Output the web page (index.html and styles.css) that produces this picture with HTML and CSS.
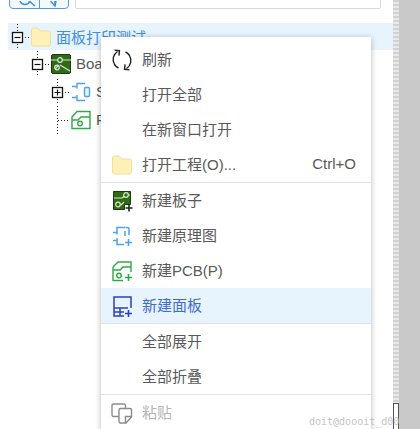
FILE: index.html
```html
<!DOCTYPE html>
<html lang="zh-CN">
<head>
<meta charset="utf-8">
<title>面板打印测试</title>
<link rel="stylesheet" href="styles.css">
</head>
<body>
<div class="app">
  <div class="main">
    <div class="panel">
      <div class="toolbar">
        <div class="btn-group">
          <button class="tool-btn wide"><svg width="29" height="7" viewBox="0 0 29 7"><path d="M10 0c1 2.500 3 3.500 5 3.500s4-1 5-3.500" fill="none" stroke="#3f8fd8" stroke-width="1.500"/><path d="M19 0l6 5" stroke="#3f8fd8" stroke-width="1.500"/></svg></button>
          <button class="tool-btn"><svg width="28" height="7" viewBox="0 0 28 7"><path d="M15 0v5M10.500 0l4.500 5 1-5" fill="none" stroke="#3f8fd8" stroke-width="1.500"/></svg></button>
        </div>
        <div class="search"></div>
      </div>
      <ul class="tree">
        <li class="node selected">
          <svg class="toggle" width="20" height="28" viewBox="0 0 20 28"><path d="M6.500 1v7M6.500 21v6M14 14.500h5" stroke="#222" stroke-dasharray="1 2"/><rect x="1.500" y="9.500" width="10" height="10" fill="#fff" stroke="#111" stroke-width="1.300"/><path d="M3.500 14.500h6" stroke="#111" stroke-width="1.200"/></svg>
          <svg class="icon" width="20" height="20" viewBox="0 0 20 20"><path d="M.5 3a2 2 0 0 1 2-2h4.500l2.500 3h8a2 2 0 0 1 2 2v11a2 2 0 0 1-2 2h-15a2 2 0 0 1-2-2z" fill="#fdf1b8" stroke="#efe0a0"/></svg>
          <span class="label link">面板打印测试</span>
        </li>
        <li class="node level-1">
          <svg class="toggle" width="20" height="28" viewBox="0 0 20 28"><path d="M6.500 1v7M6.500 21v6M14 14.500h5" stroke="#222" stroke-dasharray="1 2"/><rect x="1.500" y="9.500" width="10" height="10" fill="#fff" stroke="#111" stroke-width="1.300"/><path d="M3.500 14.500h6" stroke="#111" stroke-width="1.200"/></svg>
          <svg class="icon" width="20" height="20" viewBox="0 0 20 20"><rect width="19" height="19" x=".5" y=".5" rx="1.500" fill="#2f6b16" stroke="#1c3a10"/><path d="M0 6h7M11 6h9M4 15l3-3M9 11l5 3 5 3" fill="none" stroke="#d7e8cf" stroke-width="1.200"/><circle cx="9" cy="6" r="2.300" fill="none" stroke="#d7e8cf" stroke-width="1.200"/><circle cx="6" cy="13.500" r="2.300" fill="none" stroke="#d7e8cf" stroke-width="1.200"/></svg>
          <span class="label">Board1</span>
        </li>
        <li class="node level-2">
          <svg class="toggle" width="20" height="28" viewBox="0 0 20 28"><path d="M6.500 1v7M6.500 21v6M14 14.500h5" stroke="#222" stroke-dasharray="1 2"/><rect x="1.500" y="9.500" width="10" height="10" fill="#fff" stroke="#111" stroke-width="1.300"/><path d="M3.500 14.500h6M6.500 11.500v6" stroke="#111" stroke-width="1.200"/></svg>
          <svg class="icon" width="20" height="20" viewBox="0 0 20 20"><path d="M1 4.500h5V1.500h8M14 18.500H6v-3H1M6 4.500v2M6 13v2.500" fill="none" stroke="#4ea2e6" stroke-width="1.400"/><rect x="13.500" y="5.500" width="5" height="9" rx="1" fill="#e8f3fc" stroke="#4ea2e6" stroke-width="1.400"/></svg>
          <span class="label">Schematic</span>
        </li>
        <li class="node level-2">
          <svg class="toggle" width="20" height="28" viewBox="0 0 20 28"><path d="M6.500 0v28M7 14.500h12" stroke="#222" stroke-dasharray="1 2"/></svg>
          <svg class="icon" width="20" height="20" viewBox="0 0 20 20"><path d="M1 7l5-5.500h13v17H1zM1 10h6l3-3h9" fill="none" stroke="#2fa84a" stroke-width="1.400"/><circle cx="9" cy="13.500" r="2.300" fill="none" stroke="#2fa84a" stroke-width="1.400"/></svg>
          <span class="label">PCB</span>
        </li>
      </ul>
    </div>
    <div class="splitter"><div class="thumb"></div></div>
    <div class="watermark">doit@doooit_d00</div>
  </div>
  <div class="side"></div>
</div>

<div class="menu">
  <section class="menu-group">
    <div class="item"><svg class="item-icon" width="24" height="24" viewBox="0 0 24 24"><path d="M7.500 3.500C3 6.500 2 12 4.500 16.500 5.500 18 7 19.300 8.500 20M16.500 20.500c4.500-3 5.500-8.500 3-13C18.500 6 17 4.700 15.500 4" fill="none" stroke="#222" stroke-width="1.400"/><path d="M3.500 3h5v5M20.500 21h-5v-5" fill="none" stroke="#222" stroke-width="1.400" transform="rotate(6 12 12)"/></svg><span>刷新</span></div>
    <div class="item"><span class="blank"></span><span>打开全部</span></div>
    <div class="item"><span class="blank"></span><span>在新窗口打开</span></div>
    <div class="item"><svg class="item-icon" width="24" height="24" viewBox="-2 -2 24 24"><path d="M.5 3a2 2 0 0 1 2-2h4.500l2.500 3h8a2 2 0 0 1 2 2v11a2 2 0 0 1-2 2h-15a2 2 0 0 1-2-2z" fill="#fdf1b8" stroke="#efe0a0"/></svg><span>打开工程(O)...</span><span class="shortcut">Ctrl+O</span></div>
  </section>
  <section class="menu-group">
    <div class="item"><svg class="item-icon" width="24" height="24" viewBox="0 0 24 24"><path d="M3.500 2.500h17v13h-6v5h-11z" fill="#2f6b16" stroke="#1c3a10"/><path d="M4 9h8l4-3h4M11 16l3-3" fill="none" stroke="#d7e8cf" stroke-width="1.200"/><circle cx="16" cy="6" r="2.300" fill="#2f6b16" stroke="#d7e8cf" stroke-width="1.200"/><circle cx="8" cy="15.500" r="2.300" fill="none" stroke="#d7e8cf" stroke-width="1.200"/><path d="M15.500 19h7M19 15.500v7" stroke="#222" stroke-width="1.600"/></svg><span>新建板子</span></div>
    <div class="item"><svg class="item-icon" width="24" height="24" viewBox="0 0 24 24"><path d="M3 8.500h4v-5h8M14 20.500H7v-4H3M7 8.500v2M7 14v2.500" fill="none" stroke="#4ea2e6" stroke-width="1.500"/><path d="M15.500 3.500h2a1.500 1.500 0 0 1 1.500 1.500v6M15 7v5" fill="none" stroke="#4ea2e6" stroke-width="1.500"/><path d="M15 18.500h7M18.500 15v7" stroke="#4ea2e6" stroke-width="1.600"/></svg><span>新建原理图</span></div>
    <div class="item"><svg class="item-icon" width="24" height="24" viewBox="0 0 24 24"><path d="M3 8l5-5h13v10M3 8v13.500h10M3 11h7l3-3h8" fill="none" stroke="#2fa84a" stroke-width="1.400"/><circle cx="9" cy="16.500" r="2.300" fill="none" stroke="#2fa84a" stroke-width="1.400"/><path d="M15 18.500h7M18.500 15v7" stroke="#2fa84a" stroke-width="1.600"/></svg><span>新建PCB(P)</span></div>
    <div class="item active"><svg class="item-icon" width="24" height="24" viewBox="0 0 24 24"><path d="M21 14V3H4v19h10M4 14h14M10 14v8M4 18h10" fill="none" stroke="#2b3fc4" stroke-width="1.500"/><path d="M15 19.500h7M18.500 16v7" stroke="#2b3fc4" stroke-width="1.600"/></svg><span>新建面板</span></div>
  </section>
  <section class="menu-group">
    <div class="item"><span class="blank"></span><span>全部展开</span></div>
    <div class="item"><span class="blank"></span><span>全部折叠</span></div>
  </section>
  <section class="menu-group">
    <div class="item disabled"><svg class="item-icon" width="24" height="24" viewBox="0 0 24 24"><path d="M9 15.500H3.500a1.500 1.500 0 0 1-1.500-1.500V4.500A1.500 1.500 0 0 1 3.500 3H14a1.500 1.500 0 0 1 1.500 1.500V7" fill="none" stroke="#8c8c8c" stroke-width="1.400"/><path d="M10.500 7.500H20a1.500 1.500 0 0 1 1.500 1.500v7l-5.500 6h-5.500A1.500 1.500 0 0 1 9 20.500V9a1.500 1.500 0 0 1 1.500-1.500zM15.500 22v-6.500h6" fill="#fff" stroke="#8c8c8c" stroke-width="1.400"/></svg><span>粘贴</span></div>
  </section>
</div>
</body>
</html>
```
FILE: styles.css
```css
* { box-sizing: border-box; }
html, body { margin: 0; height: 100%; overflow: hidden; background: #fff; }
body { font-family: "Liberation Sans", "Noto Sans CJK SC", sans-serif; font-size: 15px; color: #595959; }

.app { display: flex; height: 429px; }
.main { width: 399px; display: flex; position: relative; overflow: hidden; }
.panel { width: 393px; overflow: hidden; }
.splitter { width: 6px; background: repeating-linear-gradient(#d2d2d2 0 2px, #e8e8e8 2px 4px); display: flex; flex-direction: column; justify-content: flex-end; }
.thumb { height: 26px; background: #fff; border: 1px solid #555; border-bottom: 0; }
.side { flex: 1; background: #c9c9c9; }

.toolbar { height: 9px; overflow: hidden; display: flex; align-items: flex-end; gap: 6px; padding-left: 9px; }
.btn-group { display: flex; height: 28px; width: 60px; flex: none; border: 1px solid #4e9be0; border-radius: 4px; background: #f4f9fe; overflow: hidden; }
.tool-btn { flex: 1; padding: 0; border: 0; background: none; display: flex; align-items: flex-end; }
.tool-btn.wide { flex: none; width: 30px; border-right: 1px solid #4e9be0; }
.search { width: 306px; height: 28px; flex: none; border: 1px solid #d9d9d9; border-radius: 0 0 2px 2px; background: #fff; }

.tree { list-style: none; margin: 14px 0 0 8px; padding: 0; }
.node { display: flex; align-items: center; height: 28px; padding-left: 3px; }
.node.selected { background: #e8f4fd; height: 27px; }
.level-1 { padding-left: 23px; }
.level-2 { padding-left: 43px; }
.toggle { flex: none; }
.icon { flex: none; }
.label { margin-left: 5px; padding-bottom: 1px; white-space: nowrap; }
.label.link { color: #3f8fe0; }

.watermark { position: absolute; z-index: 2; left: 309px; top: 415px; font: 10px/14px "DejaVu Sans Mono", monospace; color: #c4c4c4; white-space: nowrap; }

.menu { position: absolute; left: 101px; top: 37px; width: 270px; height: 400px; padding-top: 5px; background: #fff; box-shadow: 0 1px 6px rgba(0, 0, 0, .28); }
.menu-group + .menu-group { border-top: 1px solid #e3e3e3; }
.item { display: flex; align-items: center; height: 35px; padding: 0 15px 2px 9px; gap: 8px; }
.item.active { background: #e8f4fd; color: #3f6fc4; }
.item.disabled { color: #b5b5b5; }
.item-icon, .blank { flex: none; width: 24px; height: 24px; }
.item-icon { margin-top: 2px; }
.shortcut { margin-left: auto; }
```
